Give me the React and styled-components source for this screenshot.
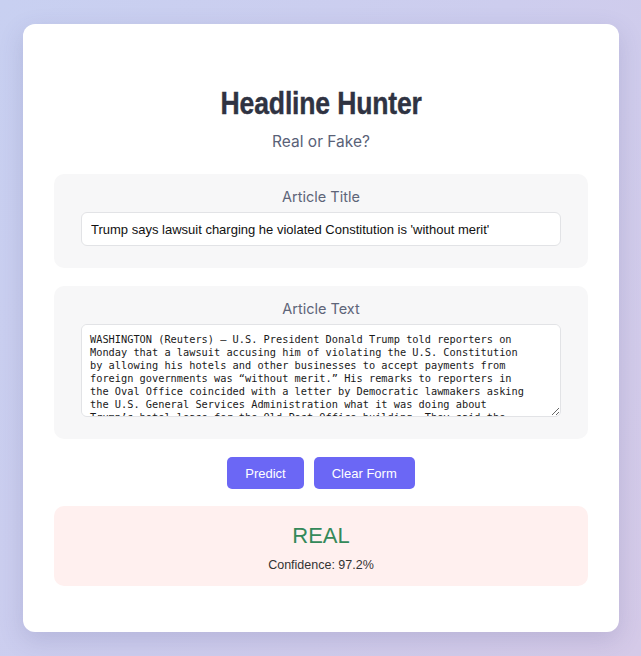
import React, { useState } from "react";
import styled, { createGlobalStyle } from "styled-components";

const GlobalStyle = createGlobalStyle`
  html, body {
    margin: 0;
    padding: 0;
  }
  body {
    min-height: 656px;
    background: linear-gradient(120deg, #c8d0f1 0%, #cdcdee 50%, #d5cae8 100%);
    font-family: "Liberation Sans", Arial, sans-serif;
  }
`;

const Page = styled.div`
  padding: 24px 22px 25px 23px;
  box-sizing: border-box;
`;

const Card = styled.div`
  background: #ffffff;
  border-radius: 12px;
  box-shadow: 0 8px 24px rgba(70, 70, 130, 0.18);
  padding: 30px 31px 46px;
  display: flex;
  flex-direction: column;
`;

const Header = styled.header`
  text-align: center;
  margin-top: 29px;
  margin-bottom: 23px;
`;

/* no condensed face is installed, so the bold sans is narrowed */
const Title = styled.h1`
  display: inline-block;
  margin: 0;
  font-family: "Liberation Sans", Arial, sans-serif;
  font-weight: 700;
  font-size: 32px;
  line-height: 40px;
  letter-spacing: -0.2px;
  color: #2f3342;
  transform: scaleX(0.83);
  -webkit-text-stroke: 0.4px #2f3342;
`;

const Subtitle = styled.p`
  margin: 9px 0 0;
  font-family: Inter, "Noto Sans", sans-serif;
  font-size: 15.5px;
  color: #596177;
`;

const Section = styled.section`
  background: #f7f7f8;
  border-radius: 10px;
  padding: 14px 27px 22px;
  margin-bottom: 18px;
  display: flex;
  flex-direction: column;
  align-items: stretch;
`;

const Label = styled.label`
  text-align: center;
  font-family: Inter, "Noto Sans", sans-serif;
  font-size: 14.5px;
  color: #5e6579;
  margin-bottom: 7px;
`;

const TextInput = styled.input`
  box-sizing: border-box;
  height: 34px;
  padding: 0 9px;
  border: 1px solid #e2e3e6;
  border-radius: 6px;
  background: #fff;
  font-family: "Liberation Sans", Arial, sans-serif;
  font-size: 13px;
  color: #111;
  outline: none;
`;

const TextArea = styled.textarea`
  box-sizing: border-box;
  height: 93px;
  padding: 8px 25px 8px 8px;
  border: 1px solid #e2e3e6;
  border-radius: 6px;
  background: #fff;
  font-family: "DejaVu Sans Mono", "Liberation Mono", monospace;
  font-size: 10.3px;
  line-height: 13px;
  color: #1a1a1a;
  resize: vertical;
  outline: none;
  scrollbar-width: none;
  &::-webkit-scrollbar {
    display: none;
  }
`;

const Actions = styled.div`
  display: flex;
  justify-content: center;
  gap: 10px;
  margin: 0 0 17px;
`;

const Button = styled.button`
  height: 32px;
  padding: 0 18px;
  border: none;
  border-radius: 5px;
  background: #6b67f5;
  color: #fff;
  font-family: "Liberation Sans", Arial, sans-serif;
  font-size: 13px;
  cursor: pointer;
`;

const Result = styled.div`
  background: #fff0ef;
  border-radius: 10px;
  padding: 17px 0 14px;
  text-align: center;
`;

const Verdict = styled.div`
  font-family: "Liberation Sans", Arial, sans-serif;
  font-size: 22px;
  line-height: 26px;
  color: ${({ $real }) => ($real ? "#34895a" : "#c0392b")};
`;

const Confidence = styled.div`
  margin-top: 9px;
  font-family: "Liberation Sans", Arial, sans-serif;
  font-size: 12.5px;
  color: #333;
`;

const ARTICLE =
  "WASHINGTON (Reuters) — U.S. President Donald Trump told reporters on Monday that a lawsuit accusing him of violating the U.S. Constitution by allowing his hotels and other businesses to accept payments from foreign governments was “without merit.” His remarks to reporters in the Oval Office coincided with a letter by Democratic lawmakers asking the U.S. General Services Administration what it was doing about Trump’s hotel lease for the Old Post Office building. They said the lease appeared to violate a clause barring federal officials from holding it.";

export default function App() {
  const [title, setTitle] = useState(
    "Trump says lawsuit charging he violated Constitution is 'without merit'"
  );
  const [text, setText] = useState(ARTICLE);

  return (
    <>
      <GlobalStyle />
      <Page>
        <Card>
          <Header>
            <Title>Headline Hunter</Title>
            <Subtitle>Real or Fake?</Subtitle>
          </Header>

          <Section>
            <Label htmlFor="title">Article Title</Label>
            <TextInput id="title" value={title} onChange={(e) => setTitle(e.target.value)} />
          </Section>

          <Section>
            <Label htmlFor="text">Article Text</Label>
            <TextArea id="text" value={text} onChange={(e) => setText(e.target.value)} />
          </Section>

          <Actions>
            <Button>Predict</Button>
            <Button onClick={() => { setTitle(""); setText(""); }}>Clear Form</Button>
          </Actions>

          <Result>
            <Verdict $real>REAL</Verdict>
            <Confidence>Confidence: 97.2%</Confidence>
          </Result>
        </Card>
      </Page>
    </>
  );
}
